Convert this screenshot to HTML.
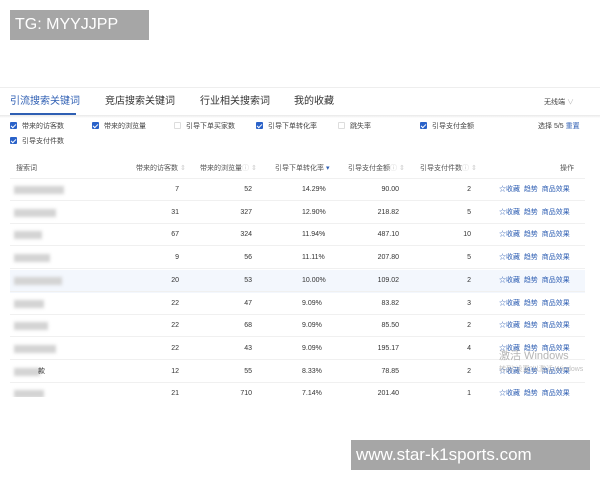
<!DOCTYPE html>
<html><head><meta charset="utf-8">
<style>
*{margin:0;padding:0;box-sizing:border-box}
body{width:600px;height:480px;background:#fff;position:relative;overflow:hidden;font-family:"Liberation Sans","Noto Sans CJK SC",sans-serif;color:#333}
.a{position:absolute;white-space:nowrap}
.tg{left:10px;top:10px;width:139px;height:30px;background:#a6a6a6;color:#fff;font-size:16px;line-height:30px;padding-left:5px}
.tab{top:95px;font-size:10px;line-height:14px;color:#333}
.cb{font-size:7px;line-height:10px;color:#444}
.cb i{display:inline-block;width:7px;height:7px;border-radius:1px;background:#2a62c9;vertical-align:-1px;margin-right:5px;position:relative}
.cb i:after{content:"";position:absolute;left:2px;top:0.5px;width:2px;height:4px;border:solid #fff;border-width:0 1px 1px 0;transform:rotate(45deg)}
.cb i.e{background:#fff;border:1px solid #ddd}
.cb i.e:after{display:none}
.h{font-size:7px;line-height:10px;color:#555;top:164px}
.r{font-size:7px;line-height:10px;color:#333;text-align:right}
.act{font-size:7px;line-height:10px;color:#2f5fb3}
.blur{background:#d3d3d3;filter:blur(1.5px);height:8px}
.row{left:10px;width:575px;height:1px;background:#f0f0f0}
</style></head><body>
<div class="a tg">TG: MYYJJPP</div>
<div class="a" style="left:0;top:87px;width:600px;height:1px;background:#eee"></div>
<div class="a" style="left:0;top:115px;width:600px;height:3px;background:linear-gradient(#e8e8e8,#fff)"></div>
<div class="a tab" style="left:10px;color:#2f5fb3">引流搜索关键词</div>
<div class="a" style="left:10px;top:113px;width:66px;height:2px;background:#2f5fb3"></div>
<div class="a tab" style="left:105px">竞店搜索关键词</div>
<div class="a tab" style="left:200px">行业相关搜索词</div>
<div class="a tab" style="left:294px">我的收藏</div>
<div class="a" style="left:544px;top:98px;font-size:7px;line-height:10px;color:#444">无线端 <span style="color:#bbb">∨</span></div>

<div class="a cb" style="left:10px;top:122px"><i></i>带来的访客数</div>
<div class="a cb" style="left:92px;top:122px"><i></i>带来的浏览量</div>
<div class="a cb" style="left:174px;top:122px"><i class="e"></i>引导下单买家数</div>
<div class="a cb" style="left:256px;top:122px"><i></i>引导下单转化率</div>
<div class="a cb" style="left:338px;top:122px"><i class="e"></i>跳失率</div>
<div class="a cb" style="left:420px;top:122px"><i></i>引导支付金额</div>
<div class="a cb" style="left:538px;top:122px">选择 5/5 <span style="color:#2f5fb3">重置</span></div>
<div class="a cb" style="left:10px;top:137px"><i></i>引导支付件数</div>

<div class="a h" style="left:16px">搜索词</div>
<div class="a h" style="left:136px">带来的访客数 <span style="color:#ccc">⇕</span></div>
<div class="a h" style="left:200px">带来的浏览量<span style="color:#ccc">ⓘ ⇕</span></div>
<div class="a h" style="left:275px">引导下单转化率 <span style="color:#2f5fb3">▾</span></div>
<div class="a h" style="left:348px">引导支付金额<span style="color:#ccc">ⓘ ⇕</span></div>
<div class="a h" style="left:420px">引导支付件数<span style="color:#ccc">ⓘ ⇕</span></div>
<div class="a h" style="left:560px">操作</div>
<div class="a row" style="top:178px"></div>

<div class="a" style="left:10px;top:270px;width:575px;height:23px;background:#f3f7fd"></div>

<div style="position:absolute;left:0;top:178px;width:600px;height:219px;overflow:hidden">
<div id="rows"></div>
</div>
<script>
var d=[[7,52,"14.29%","90.00",2,50],[31,327,"12.90%","218.82",5,42],[67,324,"11.94%","487.10",10,28],[9,56,"11.11%","207.80",5,36],[20,53,"10.00%","109.02",2,48],[22,47,"9.09%","83.82",3,30],[22,68,"9.09%","85.50",2,34],[22,43,"9.09%","195.17",4,42],[12,55,"8.33%","78.85",2,26],[21,710,"7.14%","201.40",1,30]];
var h="";
d.forEach(function(r,i){var y=i*22.7;
h+='<div class="a blur" style="left:14px;top:'+(y+8)+'px;width:'+r[5]+'px"></div>';
if(i==8)h+='<div class="a r" style="left:38px;top:'+(y+7)+'px">款</div>';
h+='<div class="a r" style="right:421px;top:'+(y+7)+'px">'+r[0]+'</div>';
h+='<div class="a r" style="right:348px;top:'+(y+7)+'px">'+r[1]+'</div>';
h+='<div class="a r" style="left:302px;top:'+(y+7)+'px;text-align:left">'+r[2]+'</div>';
h+='<div class="a r" style="right:201px;top:'+(y+7)+'px">'+r[3]+'</div>';
h+='<div class="a r" style="right:129px;top:'+(y+7)+'px">'+r[4]+'</div>';
h+='<div class="a act" style="left:499px;top:'+(y+7)+'px">☆收藏&nbsp;&nbsp;趋势&nbsp;&nbsp;商品效果</div>';
h+='<div class="a row" style="top:'+(y+22)+'px"></div>';});
document.getElementById("rows").innerHTML=h;
</script>
<div class="a" style="left:499px;top:349px;font-size:11px;line-height:14px;color:rgba(150,150,150,.7)">激活 Windows</div>
<div class="a" style="left:499px;top:365px;font-size:7px;line-height:10px;color:rgba(150,150,150,.6)">转到"设置"以激活 Windows</div>
<div class="a" style="left:351px;top:440px;width:239px;height:30px;background:#a6a6a6;color:#fff;font-size:17px;line-height:30px;padding-left:5px">www.star-k1sports.com</div>
</body></html>
